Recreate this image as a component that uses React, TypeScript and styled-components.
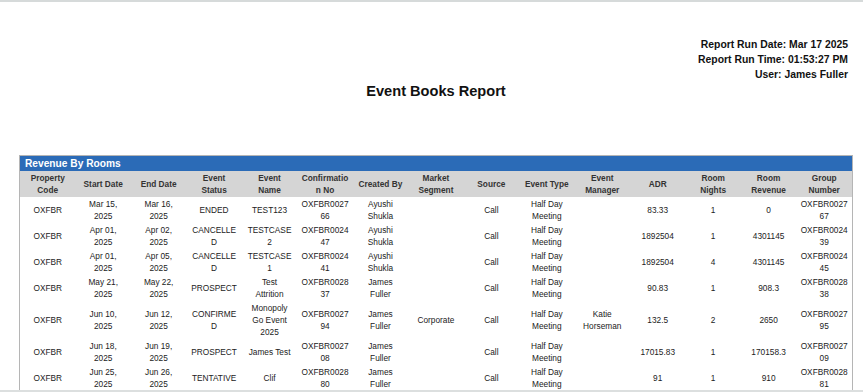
import React from 'react';
import styled, { createGlobalStyle } from 'styled-components';

const GlobalStyle = createGlobalStyle`
  html, body {
    margin: 0;
    padding: 0;
    background: #ffffff;
  }
  body {
    font-family: "Liberation Sans", Arial, sans-serif;
    color: #222;
  }
`;

const Page = styled.div`
  height: 100vh;
  box-sizing: border-box;
  overflow: hidden;
  border-top: 2px solid #d6dada;
  border-bottom: 2px solid #dcdfdf;
  padding: 35px 10px 0 19px;
`;

const RunInfo = styled.div`
  text-align: right;
  padding-right: 5px;
  font-size: 10.4px;
  font-weight: 700;
  line-height: 15px;
  color: #111;
`;

const Title = styled.h1`
  margin: 0;
  text-align: center;
  font-size: 14.6px;
  line-height: 18px;
  font-weight: 700;
  color: #111;
`;

const Section = styled.div`
  margin-top: 55px;
  border: 1px solid #b5b5b5;
  border-bottom: none;
`;

const SectionBar = styled.div`
  background: #2b6bb7;
  color: #fff;
  font-size: 10.2px;
  font-weight: 700;
  line-height: 15px;
  padding-left: 5px;
`;

const Table = styled.table`
  width: 100%;
  table-layout: fixed;
  border-collapse: collapse;
`;

const HeadCell = styled.th`
  background: #d5d5d5;
  color: #333;
  font-size: 8.3px;
  font-weight: 700;
  line-height: 12px;
  padding: 1px 2px;
  text-align: center;
  vertical-align: middle;
  white-space: pre-line;
`;

const Cell = styled.td`
  color: #222;
  font-size: 8.3px;
  line-height: 12px;
  padding: 1px 2px;
  text-align: center;
  vertical-align: middle;
  white-space: pre-line;
`;

const columns = [
  'Property\nCode',
  'Start Date',
  'End Date',
  'Event\nStatus',
  'Event\nName',
  'Confirmatio\nn No',
  'Created By',
  'Market\nSegment',
  'Source',
  'Event Type',
  'Event\nManager',
  'ADR',
  'Room\nNights',
  'Room\nRevenue',
  'Group\nNumber',
];

const HDM = 'Half Day\nMeeting';

const rows: string[][] = [
  ['OXFBR', 'Mar 15,\n2025', 'Mar 16,\n2025', 'ENDED', 'TEST123', 'OXFBR0027\n66', 'Ayushi\nShukla', '', 'Call', HDM, '', '83.33', '1', '0', 'OXFBR0027\n67'],
  ['OXFBR', 'Apr 01,\n2025', 'Apr 02,\n2025', 'CANCELLE\nD', 'TESTCASE\n2', 'OXFBR0024\n47', 'Ayushi\nShukla', '', 'Call', HDM, '', '1892504', '1', '4301145', 'OXFBR0024\n39'],
  ['OXFBR', 'Apr 01,\n2025', 'Apr 05,\n2025', 'CANCELLE\nD', 'TESTCASE\n1', 'OXFBR0024\n41', 'Ayushi\nShukla', '', 'Call', HDM, '', '1892504', '4', '4301145', 'OXFBR0024\n45'],
  ['OXFBR', 'May 21,\n2025', 'May 22,\n2025', 'PROSPECT', 'Test\nAttrition', 'OXFBR0028\n37', 'James\nFuller', '', 'Call', HDM, '', '90.83', '1', '908.3', 'OXFBR0028\n38'],
  ['OXFBR', 'Jun 10,\n2025', 'Jun 12,\n2025', 'CONFIRME\nD', 'Monopoly\nGo Event\n2025', 'OXFBR0027\n94', 'James\nFuller', 'Corporate', 'Call', HDM, 'Katie\nHorseman', '132.5', '2', '2650', 'OXFBR0027\n95'],
  ['OXFBR', 'Jun 18,\n2025', 'Jun 19,\n2025', 'PROSPECT', 'James Test', 'OXFBR0027\n08', 'James\nFuller', '', 'Call', HDM, '', '17015.83', '1', '170158.3', 'OXFBR0027\n09'],
  ['OXFBR', 'Jun 25,\n2025', 'Jun 26,\n2025', 'TENTATIVE', 'Clif', 'OXFBR0028\n80', 'James\nFuller', '', 'Call', HDM, '', '91', '1', '910', 'OXFBR0028\n81'],
];

const App: React.FC = () => {
  return (
    <>
      <GlobalStyle />
      <Page>
        <RunInfo>
          <div>Report Run Date: Mar 17 2025</div>
          <div>Report Run Time: 01:53:27 PM</div>
          <div>User: James Fuller</div>
        </RunInfo>
        <Title>Event Books Report</Title>

        <Section>
          <SectionBar>Revenue By Rooms</SectionBar>
          <Table>
            <thead>
              <tr>
                {columns.map(c => (
                  <HeadCell key={c}>{c}</HeadCell>
                ))}
              </tr>
            </thead>
            <tbody>
              {rows.map((r, i) => (
                <tr key={i}>
                  {r.map((v, j) => (
                    <Cell key={j}>{v}</Cell>
                  ))}
                </tr>
              ))}
            </tbody>
          </Table>
        </Section>
      </Page>
    </>
  );
};

export default App;
